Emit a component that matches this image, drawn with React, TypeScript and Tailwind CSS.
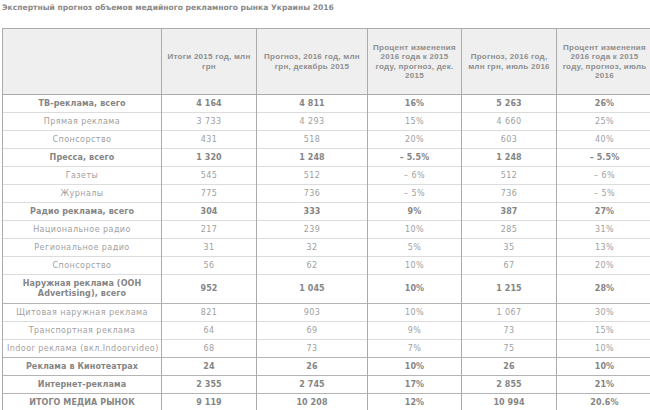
import React from "react";

type Row = {
  label: React.ReactNode;
  cells: string[];
  total?: boolean;
  tall?: boolean;
  dark?: boolean;
};

const ROWS: Row[] = [
  { label: "ТВ-реклама, всего", cells: ["4 164", "4 811", "16%", "5 263", "26%"], total: true },
  { label: "Прямая реклама", cells: ["3 733", "4 293", "15%", "4 660", "25%"] },
  { label: "Спонсорство", cells: ["431", "518", "20%", "603", "40%"] },
  { label: "Пресса, всего", cells: ["1 320", "1 248", "– 5.5%", "1 248", "– 5.5%"], total: true },
  { label: "Газеты", cells: ["545", "512", "– 6%", "512", "– 6%"] },
  { label: "Журналы", cells: ["775", "736", "– 5%", "736", "– 5%"] },
  { label: "Радио реклама, всего", cells: ["304", "333", "9%", "387", "27%"], total: true },
  { label: "Национальное радио", cells: ["217", "239", "10%", "285", "31%"] },
  { label: "Региональное радио", cells: ["31", "32", "5%", "35", "13%"] },
  { label: "Спонсорство", cells: ["56", "62", "10%", "67", "20%"] },
  {
    label: (
      <>
        Наружная реклама (OOH
        <br />
        Advertising), всего
      </>
    ),
    cells: ["952", "1 045", "10%", "1 215", "28%"],
    total: true,
    tall: true,
  },
  { label: "Щитовая наружная реклама", cells: ["821", "903", "10%", "1 067", "30%"], dark: true },
  { label: "Транспортная реклама", cells: ["64", "69", "9%", "73", "15%"] },
  { label: "Indoor реклама (вкл.Indoorvideo)", cells: ["68", "73", "7%", "75", "10%"] },
  { label: "Реклама в Кинотеатрах", cells: ["24", "26", "10%", "26", "10%"], total: true, dark: true },
  { label: "Интернет-реклама", cells: ["2 355", "2 745", "17%", "2 855", "21%"], total: true, dark: true },
  { label: "ИТОГО МЕДИА РЫНОК", cells: ["9 119", "10 208", "12%", "10 994", "20.6%"], total: true, dark: true },
];

const HEAD: React.ReactNode[] = [
  "",
  <>Итоги 2015 год, млн<br />грн</>,
  <>Прогноз, 2016 год, млн<br />грн, декабрь 2015</>,
  <>Процент изменения<br />2016 года к 2015<br />году, прогноз, дек.<br />2015</>,
  <>Прогноз, 2016 год,<br />млн грн, июль 2016</>,
  <>Процент изменения<br />2016 года к 2015<br />году, прогноз, июль<br />2016</>,
];

const WIDTHS = ["w-[159px]", "w-[95px]", "w-[111px]", "w-[94px]", "w-[95px]", "w-[96px]"];

export default function App() {
  return (
    <div
      className="w-[650px] h-[410px] overflow-hidden bg-white text-[8px] leading-[1.2] tracking-[0.45px]"
      style={{ fontFamily: '"DejaVu Sans", "Noto Sans", sans-serif' }}
    >
      {/* Title */}
      <div className="pl-[2px] pt-[3px] h-[28px] font-bold text-[#8a8a8a] leading-[10px] text-[7.6px] tracking-normal">
        Экспертный прогноз объемов медийного рекламного рынка Украины 2016
      </div>

      <table className="ml-[2px] w-[650px] table-fixed border-collapse border border-[#ababab]">
        <colgroup>
          {WIDTHS.map((w, i) => (
            <col key={i} className={w} />
          ))}
        </colgroup>
        <thead>
          <tr className="bg-[#efefef]">
            {HEAD.map((h, i) => (
              <th
                key={i}
                className="h-[66px] px-0 align-middle text-center font-bold whitespace-nowrap text-[8px] leading-[9.4px] tracking-[0.25px] text-[#8e8e8e] border-l border-b border-[#ababab] font-['Liberation_Sans',sans-serif]"
              >
                {h}
              </th>
            ))}
          </tr>
        </thead>
        <tbody>
          {ROWS.map((r, ri) => (
            <tr key={ri}>
              {[r.label, ...r.cells].map((c, ci) => (
                <td
                  key={ci}
                  className={`${r.tall ? "h-[29px]" : "h-[18px]"} p-0 px-1 align-middle text-center whitespace-nowrap border-l border-l-[#ababab] border-t ${
                    r.dark ? "border-t-[#b4b4b4]" : "border-t-[#dcdcdc]"
                  } ${r.total ? "font-bold tracking-[0.1px] text-[#858585]" : "text-[#a0a0a0]"}`}
                >
                  {c}
                </td>
              ))}
            </tr>
          ))}
        </tbody>
      </table>
    </div>
  );
}
